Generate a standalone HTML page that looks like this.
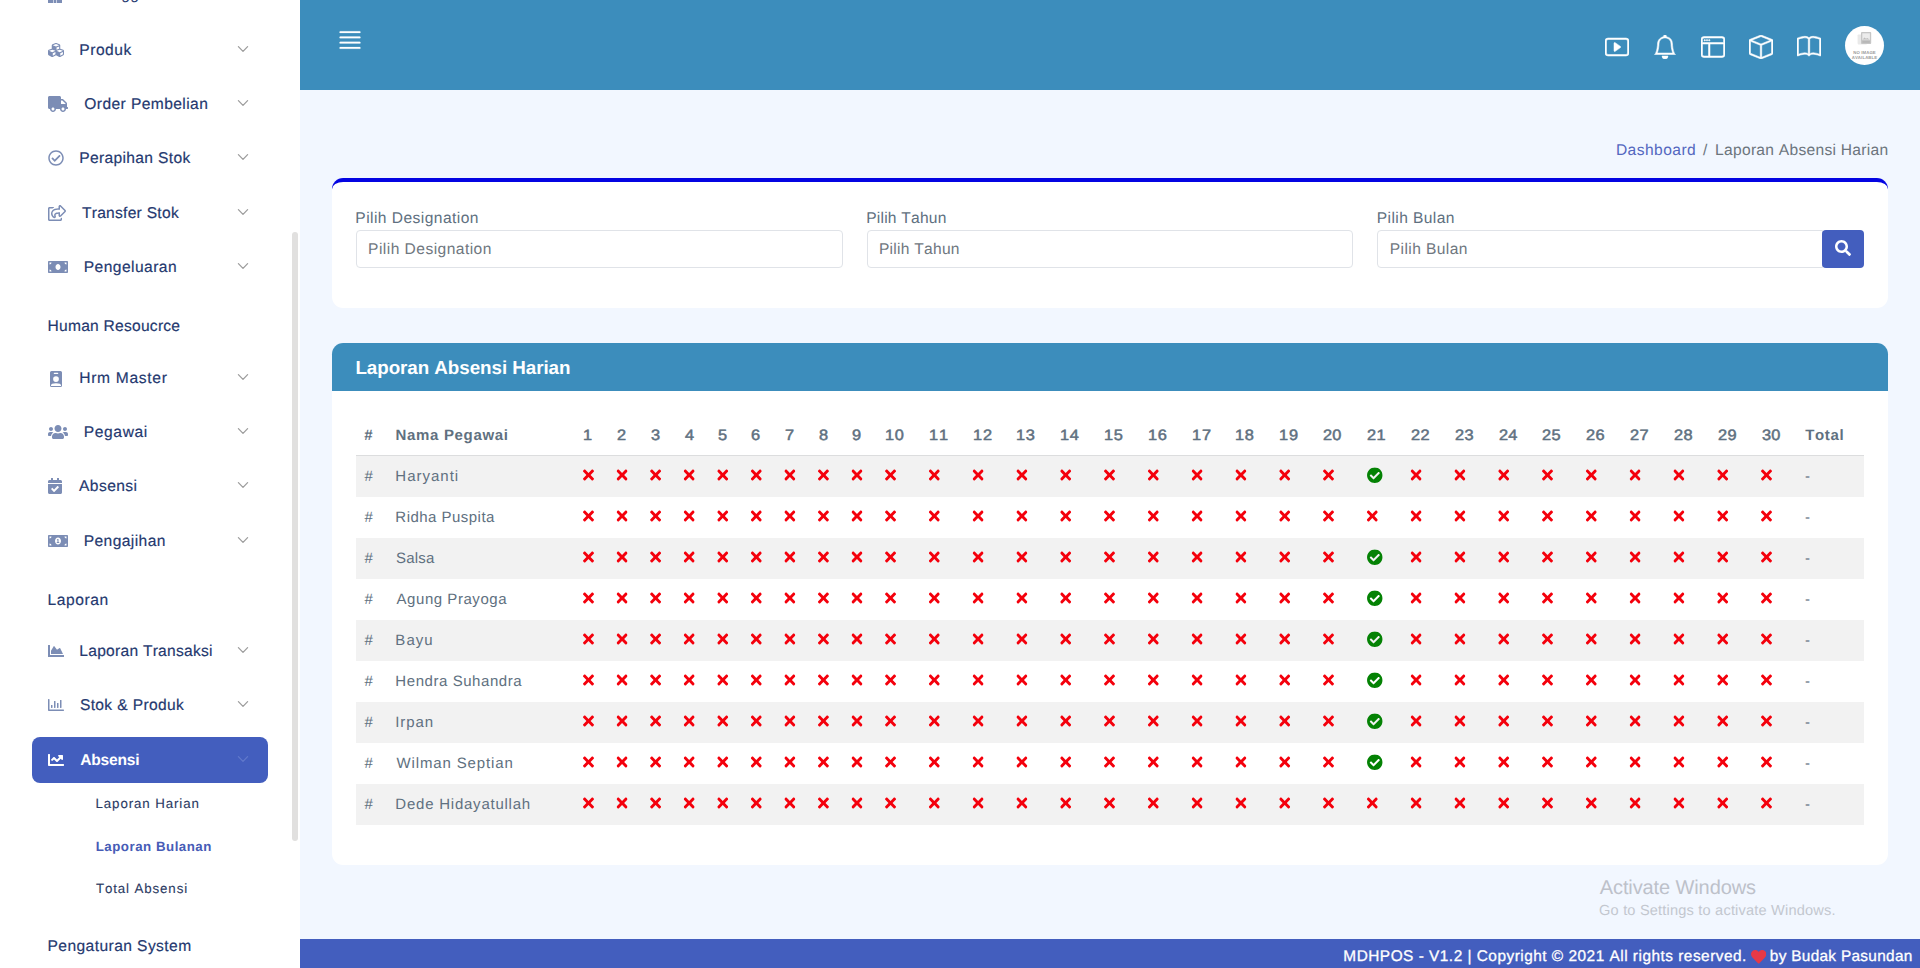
<!DOCTYPE html>
<html lang="en"><head><meta charset="utf-8"><title>Laporan Absensi Harian</title>
<style>
html,body{margin:0;padding:0}
body{width:1920px;height:968px;overflow:hidden;position:relative;background:#f2f7ff;font-family:"Liberation Sans",sans-serif;font-kerning:none;text-rendering:geometricPrecision}
.b{position:absolute;display:block}
.t{position:absolute;white-space:nowrap;line-height:20px;display:block}
</style></head><body>
<div class="b" style="left:0.00px;top:0.00px;width:300.00px;height:968.00px;background:#ffffff;"></div>
<div class="b" style="left:292.00px;top:232.00px;width:6.00px;height:609.00px;background:#e1e0df;border-radius:3px;"></div>
<div class="b" style="left:32.00px;top:737.00px;width:236.00px;height:46.00px;background:#435ebe;border-radius:8px;"></div>
<span class="t" style="left:79.32px;top:41.00px;font-size:15.60px;color:#25396f;letter-spacing:0.496px;-webkit-text-stroke:0.18px #25396f;">Produk</span>
<span class="t" style="left:84.26px;top:95.00px;font-size:15.60px;color:#25396f;letter-spacing:0.409px;-webkit-text-stroke:0.18px #25396f;">Order Pembelian</span>
<span class="t" style="left:79.32px;top:149.00px;font-size:15.60px;color:#25396f;letter-spacing:0.326px;-webkit-text-stroke:0.18px #25396f;">Perapihan Stok</span>
<span class="t" style="left:81.90px;top:204.00px;font-size:15.60px;color:#25396f;letter-spacing:0.266px;-webkit-text-stroke:0.18px #25396f;">Transfer Stok</span>
<span class="t" style="left:83.72px;top:258.00px;font-size:15.60px;color:#25396f;letter-spacing:0.442px;-webkit-text-stroke:0.18px #25396f;">Pengeluaran</span>
<span class="t" style="left:47.47px;top:317.00px;font-size:15.60px;color:#25396f;letter-spacing:0.245px;-webkit-text-stroke:0.18px #25396f;">Human Resoucrce</span>
<span class="t" style="left:79.32px;top:369.00px;font-size:15.60px;color:#25396f;letter-spacing:0.675px;-webkit-text-stroke:0.18px #25396f;">Hrm Master</span>
<span class="t" style="left:83.72px;top:423.00px;font-size:15.60px;color:#25396f;letter-spacing:0.623px;-webkit-text-stroke:0.18px #25396f;">Pegawai</span>
<span class="t" style="left:78.97px;top:477.00px;font-size:15.60px;color:#25396f;letter-spacing:0.430px;-webkit-text-stroke:0.18px #25396f;">Absensi</span>
<span class="t" style="left:83.72px;top:532.00px;font-size:15.60px;color:#25396f;letter-spacing:0.403px;-webkit-text-stroke:0.18px #25396f;">Pengajihan</span>
<span class="t" style="left:47.47px;top:591.00px;font-size:15.60px;color:#25396f;letter-spacing:0.590px;-webkit-text-stroke:0.18px #25396f;">Laporan</span>
<span class="t" style="left:79.32px;top:642.00px;font-size:15.60px;color:#25396f;letter-spacing:0.252px;-webkit-text-stroke:0.18px #25396f;">Laporan Transaksi</span>
<span class="t" style="left:79.89px;top:696.00px;font-size:15.60px;color:#25396f;letter-spacing:0.364px;-webkit-text-stroke:0.18px #25396f;">Stok &amp; Produk</span>
<span class="t" style="left:47.47px;top:937.00px;font-size:15.60px;color:#25396f;letter-spacing:0.422px;-webkit-text-stroke:0.18px #25396f;">Pengaturan System</span>
<span class="t" style="left:79.32px;top:-15.00px;font-size:15.60px;color:#25396f;letter-spacing:0.386px;">Pelanggan</span>
<span class="t" style="left:80.21px;top:751.00px;font-size:15.60px;color:#ffffff;letter-spacing:-0.216px;font-weight:700;">Absensi</span>
<span class="t" style="left:95.51px;top:794.00px;font-size:13.30px;color:#2b3a63;letter-spacing:0.905px;-webkit-text-stroke:0.12px #2b3a63;">Laporan Harian</span>
<span class="t" style="left:95.71px;top:837.00px;font-size:13.30px;color:#475cb6;letter-spacing:0.506px;font-weight:700;">Laporan Bulanan</span>
<span class="t" style="left:95.95px;top:879.00px;font-size:13.30px;color:#2b3a63;letter-spacing:0.885px;-webkit-text-stroke:0.12px #2b3a63;">Total Absensi</span>
<svg class="b" style="left:236.00px;top:44.00px;" width="14.00" height="10.00" viewBox="0 0 14 10"><polyline points="2.4,2.6 7,7.4 11.6,2.6" fill="none" stroke="#9c9c9c" stroke-width="1.25" stroke-linecap="round" stroke-linejoin="round"/></svg>
<svg class="b" style="left:236.00px;top:98.00px;" width="14.00" height="10.00" viewBox="0 0 14 10"><polyline points="2.4,2.6 7,7.4 11.6,2.6" fill="none" stroke="#9c9c9c" stroke-width="1.25" stroke-linecap="round" stroke-linejoin="round"/></svg>
<svg class="b" style="left:236.00px;top:152.00px;" width="14.00" height="10.00" viewBox="0 0 14 10"><polyline points="2.4,2.6 7,7.4 11.6,2.6" fill="none" stroke="#9c9c9c" stroke-width="1.25" stroke-linecap="round" stroke-linejoin="round"/></svg>
<svg class="b" style="left:236.00px;top:207.00px;" width="14.00" height="10.00" viewBox="0 0 14 10"><polyline points="2.4,2.6 7,7.4 11.6,2.6" fill="none" stroke="#9c9c9c" stroke-width="1.25" stroke-linecap="round" stroke-linejoin="round"/></svg>
<svg class="b" style="left:236.00px;top:261.00px;" width="14.00" height="10.00" viewBox="0 0 14 10"><polyline points="2.4,2.6 7,7.4 11.6,2.6" fill="none" stroke="#9c9c9c" stroke-width="1.25" stroke-linecap="round" stroke-linejoin="round"/></svg>
<svg class="b" style="left:236.00px;top:372.00px;" width="14.00" height="10.00" viewBox="0 0 14 10"><polyline points="2.4,2.6 7,7.4 11.6,2.6" fill="none" stroke="#9c9c9c" stroke-width="1.25" stroke-linecap="round" stroke-linejoin="round"/></svg>
<svg class="b" style="left:236.00px;top:426.00px;" width="14.00" height="10.00" viewBox="0 0 14 10"><polyline points="2.4,2.6 7,7.4 11.6,2.6" fill="none" stroke="#9c9c9c" stroke-width="1.25" stroke-linecap="round" stroke-linejoin="round"/></svg>
<svg class="b" style="left:236.00px;top:480.00px;" width="14.00" height="10.00" viewBox="0 0 14 10"><polyline points="2.4,2.6 7,7.4 11.6,2.6" fill="none" stroke="#9c9c9c" stroke-width="1.25" stroke-linecap="round" stroke-linejoin="round"/></svg>
<svg class="b" style="left:236.00px;top:535.00px;" width="14.00" height="10.00" viewBox="0 0 14 10"><polyline points="2.4,2.6 7,7.4 11.6,2.6" fill="none" stroke="#9c9c9c" stroke-width="1.25" stroke-linecap="round" stroke-linejoin="round"/></svg>
<svg class="b" style="left:236.00px;top:645.00px;" width="14.00" height="10.00" viewBox="0 0 14 10"><polyline points="2.4,2.6 7,7.4 11.6,2.6" fill="none" stroke="#9c9c9c" stroke-width="1.25" stroke-linecap="round" stroke-linejoin="round"/></svg>
<svg class="b" style="left:236.00px;top:699.00px;" width="14.00" height="10.00" viewBox="0 0 14 10"><polyline points="2.4,2.6 7,7.4 11.6,2.6" fill="none" stroke="#9c9c9c" stroke-width="1.25" stroke-linecap="round" stroke-linejoin="round"/></svg>
<svg class="b" style="left:236.00px;top:754.00px;" width="14.00" height="10.00" viewBox="0 0 14 10"><polyline points="2.4,2.6 7,7.4 11.6,2.6" fill="none" stroke="#6179cb" stroke-width="1.25" stroke-linecap="round" stroke-linejoin="round"/></svg>
<svg class="b" style="left:48.00px;top:42.30px;" width="16.00" height="16.00" viewBox="0 0 512 512"><path fill="#7c8db5" d="M488.6 250.2L392 214V105.5c0-15-9.300-28.400-23.400-33.700l-100-37.500c-8.100-3.100-17.100-3.100-25.300 0l-100 37.500c-14.100 5.300-23.400 18.700-23.400 33.700V214l-96.600 36.200C9.300 255.500 0 268.900 0 283.900V394c0 13.600 7.700 26.100 19.900 32.200l100 50c10.100 5.100 22.100 5.100 32.200 0l103.900-52 103.900 52c10.100 5.100 22.100 5.100 32.200 0l100-50c12.200-6.100 19.900-18.600 19.900-32.200V283.900c0-15-9.300-28.400-23.400-33.700zM358 214.800l-85 31.900v-68.200l85-37v73.300zM154 104.100l102-38.200 102 38.200v.600l-102 41.400-102-41.400v-.600zm84 291.100l-85 42.500v-79.100l85-38.800v75.400zm0-112l-102 41.400-102-41.400v-.600l102-38.200 102 38.200v.600zm240 112l-85 42.500v-79.100l85-38.800v75.400zm0-112l-102 41.400-102-41.400v-.600l102-38.200 102 38.200v.600z"/></svg>
<svg class="b" style="left:48.00px;top:96.00px;" width="20.00" height="16.00" viewBox="0 0 640 512"><path fill="#7c8db5" d="M624 352h-16V243.900c0-12.700-5.100-24.900-14.100-33.900L494 110.100c-9-9-21.200-14.100-33.900-14.100H416V48c0-26.500-21.500-48-48-48H48C21.500 0 0 21.500 0 48v320c0 26.500 21.500 48 48 48h16c0 53 43 96 96 96s96-43 96-96h128c0 53 43 96 96 96s96-43 96-96h48c8.800 0 16-7.200 16-16v-32c0-8.800-7.200-16-16-16zM160 464c-26.500 0-48-21.500-48-48s21.500-48 48-48 48 21.500 48 48-21.500 48-48 48zm320 0c-26.500 0-48-21.500-48-48s21.500-48 48-48 48 21.500 48 48-21.500 48-48 48zm80-208H416V144h44.100l99.900 99.900V256z"/></svg>
<svg class="b" style="left:48.00px;top:149.80px;" width="16.00" height="16.00" viewBox="0 0 512 512"><path fill="#7c8db5" d="M256 8C119.033 8 8 119.033 8 256s111.033 248 248 248 248-111.033 248-248S392.967 8 256 8zm0 48c110.532 0 200 89.451 200 200 0 110.532-89.451 200-200 200-110.532 0-200-89.451-200-200 0-110.532 89.451-200 200-200m140.204 130.267l-22.536-22.718c-4.667-4.705-12.265-4.736-16.970-.068L215.346 303.697l-59.792-60.277c-4.667-4.705-12.265-4.736-16.970-.069l-22.719 22.536c-4.705 4.667-4.736 12.265-.068 16.971l90.781 91.516c4.667 4.705 12.265 4.736 16.970.068l172.589-171.204c4.704-4.668 4.734-12.266.067-16.971z"/></svg>
<svg class="b" style="left:48.00px;top:204.80px;" width="18.00" height="16.00" viewBox="0 0 576 512"><path fill="#7c8db5" d="M561.938 158.060L417.940 14.092C387.926-15.922 336 5.097 336 48.032v57.198c-42.450 1.880-84.030 6.550-120.760 17.990-35.170 10.950-63.070 27.580-82.910 49.420C108.220 199.200 96 232.600 96 271.940c0 61.697 33.178 112.455 84.870 144.760 37.546 23.508 85.248-12.651 71.020-55.740-15.515-47.119-17.156-70.923 84.110-78.760V336c0 42.993 51.968 63.913 81.940 33.940l143.998-144c18.750-18.740 18.750-49.140 0-67.880zM384 336V232.160C255.309 234.082 166.492 255.350 206.310 376 176.790 357.550 144 324.080 144 271.940c0-109.334 129.140-118.947 240-119.850V48l144 144-144 144zm24.740 84.493a82.658 82.658 0 0 0 20.974-9.303c7.976-4.952 18.286.826 18.286 10.214V464c0 26.510-21.490 48-48 48H48c-26.510 0-48-21.490-48-48V112c0-26.510 21.490-48 48-48h132c6.627 0 12 5.373 12 12v4.486c0 4.917-2.987 9.369-7.569 11.152-13.702 5.331-26.396 11.537-38.050 18.585a12.138 12.138 0 0 1-6.280 1.777H54a6 6 0 0 0-6 6v340a6 6 0 0 0 6 6h340a6 6 0 0 0 6-6v-25.966c0-5.370 3.579-10.059 8.740-11.541z"/></svg>
<svg class="b" style="left:48.00px;top:259.00px;" width="20.00" height="16.00" viewBox="0 0 640 512"><path fill="#7c8db5" d="M608 64H32C14.330 64 0 78.330 0 96v320c0 17.670 14.330 32 32 32h576c17.670 0 32-14.330 32-32V96c0-17.670-14.330-32-32-32zM48 400v-64c35.350 0 64 28.650 64 64H48zm0-224v-64h64c0 35.350-28.650 64-64 64zm272 176c-44.190 0-80-42.990-80-96 0-53.020 35.820-96 80-96s80 42.980 80 96c0 53.030-35.830 96-80 96zm272 48h-64c0-35.350 28.650-64 64-64v64zm0-224c-35.350 0-64-28.650-64-64h64v64z"/></svg>
<svg class="b" style="left:50.00px;top:371.00px;" width="12.00" height="16.00" viewBox="0 0 384 512"><path fill="#7c8db5" fill-rule="evenodd" d="M48 0h288a48 48 0 0 1 48 48v416a48 48 0 0 1-48 48H48a48 48 0 0 1-48-48V48A48 48 0 0 1 48 0zM140 58h104a20 20 0 0 1 0 40H140a20 20 0 0 1 0-40zM192 164a92 92 0 1 0 0 184a92 92 0 1 0 0-184zM32 482v-24c0-42 50-64 160-64s160 22 160 64v24z"/></svg>
<svg class="b" style="left:48.00px;top:424.00px;" width="20.00" height="16.00" viewBox="0 0 640 512"><path fill="#7c8db5" d="M96 224c35.300 0 64-28.700 64-64s-28.700-64-64-64-64 28.700-64 64 28.700 64 64 64zm448 0c35.300 0 64-28.700 64-64s-28.700-64-64-64-64 28.700-64 64 28.700 64 64 64zm32 32h-64c-17.600 0-33.500 7.100-45.100 18.600 40.300 22.100 68.900 62 75.100 109.400h66c17.700 0 32-14.300 32-32v-32c0-35.300-28.700-64-64-64zm-256 0c61.900 0 112-50.100 112-112S381.900 32 320 32 208 82.100 208 144s50.100 112 112 112zm76.800 32h-8.300c-20.800 10-43.900 16-68.500 16s-47.600-6-68.500-16h-8.300C179.600 288 128 339.600 128 403.200V432c0 26.500 21.500 48 48 48h288c26.500 0 48-21.500 48-48v-28.800c0-63.600-51.600-115.200-115.200-115.200zm-223.700-13.400C161.500 263.100 145.600 256 128 256H64c-35.300 0-64 28.700-64 64v32c0 17.700 14.300 32 32 32h65.900c6.300-47.400 34.900-87.300 75.200-109.400z"/></svg>
<svg class="b" style="left:48.00px;top:478.00px;" width="14.00" height="16.00" viewBox="0 0 448 512"><path fill="#7c8db5" d="M436 160H12c-6.627 0-12-5.373-12-12v-36c0-26.510 21.490-48 48-48h48V12c0-6.627 5.373-12 12-12h40c6.627 0 12 5.373 12 12v52h128V12c0-6.627 5.373-12 12-12h40c6.627 0 12 5.373 12 12v52h48c26.510 0 48 21.490 48 48v36c0 6.627-5.373 12-12 12zM12 192h424c6.627 0 12 5.373 12 12v260c0 26.510-21.490 48-48 48H48c-26.510 0-48-21.490-48-48V204c0-6.627 5.373-12 12-12zm333.296 95.947l-28.169-28.398c-4.667-4.705-12.265-4.736-16.970-.068L194.120 364.665l-45.980-46.352c-4.667-4.705-12.266-4.736-16.971-.068l-28.397 28.170c-4.705 4.667-4.736 12.265-.068 16.970l82.601 83.269c4.667 4.705 12.265 4.736 16.970.068l142.953-141.805c4.705-4.667 4.736-12.265.068-16.970z"/></svg>
<svg class="b" style="left:48.00px;top:533.00px;" width="20.00" height="16.00" viewBox="0 0 640 512"><path fill="#7c8db5" d="M352 288h-16v-88c0-4.420-3.580-8-8-8h-13.580c-4.740 0-9.370 1.400-13.310 4.030l-15.330 10.220a7.994 7.994 0 0 0-2.220 11.090l8.880 13.310a7.994 7.994 0 0 0 11.090 2.220l.470-.310V288h-16c-4.420 0-8 3.580-8 8v16c0 4.420 3.580 8 8 8h64c4.420 0 8-3.580 8-8v-16c0-4.420-3.580-8-8-8zM608 64H32C14.330 64 0 78.330 0 96v320c0 17.670 14.330 32 32 32h576c17.670 0 32-14.330 32-32V96c0-17.670-14.330-32-32-32zM48 400v-64c35.350 0 64 28.650 64 64H48zm0-224v-64h64c0 35.350-28.650 64-64 64zm272 192c-53.020 0-96-50.150-96-112 0-61.860 42.980-112 96-112s96 50.140 96 112c0 61.870-43 112-96 112zm272 32h-64c0-35.350 28.650-64 64-64v64zm0-224c-35.350 0-64-28.650-64-64h64v64z"/></svg>
<svg class="b" style="left:48.00px;top:643.00px;" width="16.00" height="16.00" viewBox="0 0 512 512"><path fill="#7c8db5" d="M500 384c6.600 0 12 5.400 12 12v40c0 6.600-5.400 12-12 12H12c-6.600 0-12-5.400-12-12V76c0-6.600 5.400-12 12-12h40c6.600 0 12 5.400 12 12v308h436zM372.700 159.500L288 216l-85.300-113.700c-5.100-6.800-15.500-6.300-19.900 1L96 248v104h384l-89.900-187.800c-3.200-6.500-11.400-8.700-17.400-4.700z"/></svg>
<svg class="b" style="left:48.00px;top:697.00px;" width="16.00" height="16.00" viewBox="0 0 512 512"><path fill="#7c8db5" d="M396.800 352h22.400c6.400 0 12.800-6.400 12.800-12.800V108.800c0-6.400-6.400-12.800-12.800-12.800h-22.400c-6.400 0-12.800 6.400-12.800 12.800v230.400c0 6.400 6.400 12.800 12.800 12.800zm-192 0h22.400c6.400 0 12.800-6.400 12.800-12.800V140.800c0-6.400-6.400-12.800-12.800-12.800h-22.400c-6.400 0-12.800 6.400-12.800 12.800v198.400c0 6.400 6.400 12.800 12.800 12.800zm96 0h22.400c6.400 0 12.800-6.400 12.800-12.800V204.800c0-6.400-6.400-12.800-12.800-12.800h-22.400c-6.400 0-12.800 6.400-12.800 12.800v134.400c0 6.400 6.400 12.800 12.800 12.800zM496 400H48V80c0-8.840-7.160-16-16-16H16C7.160 64 0 71.160 0 80v336c0 17.670 14.330 32 32 32h464c8.840 0 16-7.160 16-16v-16c0-8.840-7.160-16-16-16zm-387.200-48h22.400c6.400 0 12.800-6.400 12.800-12.800v-70.400c0-6.400-6.400-12.800-12.800-12.800h-22.400c-6.400 0-12.800 6.400-12.800 12.800v70.400c0 6.400 6.400 12.800 12.800 12.800z"/></svg>
<svg class="b" style="left:48.00px;top:752.00px;" width="16.00" height="16.00" viewBox="0 0 512 512"><path fill="#ffffff" d="M496 384H64V80c0-8.840-7.160-16-16-16H16C7.160 64 0 71.160 0 80v336c0 17.670 14.330 32 32 32h464c8.840 0 16-7.160 16-16v-32c0-8.840-7.160-16-16-16zM464 96H345.940c-21.380 0-32.090 25.850-16.970 40.970l32.400 32.400L288 242.750l-73.370-73.370c-12.500-12.500-32.760-12.500-45.250 0l-68.690 68.690c-6.250 6.250-6.250 16.380 0 22.630l22.620 22.620c6.250 6.250 16.380 6.250 22.630 0L192 237.250l73.370 73.370c12.500 12.500 32.760 12.500 45.250 0l96-96 32.400 32.400c15.120 15.120 40.970 4.410 40.970-16.970V112c.010-8.840-7.150-16-15.990-16z"/></svg>
<div class="b" style="left:48.00px;top:-10.00px;width:14.00px;height:12.80px;background:#7c8db5;"></div>
<div class="b" style="left:53.40px;top:-10.00px;width:0.80px;height:12.80px;background:#c9d0e2;"></div>
<div class="b" style="left:56.30px;top:-10.00px;width:0.80px;height:12.80px;background:#c9d0e2;"></div>
<div class="b" style="left:300.00px;top:0.00px;width:1620.00px;height:90.00px;background:#3c8dbc;"></div>
<svg class="b" style="left:336.00px;top:26.00px;" width="28.00" height="28.00" viewBox="0 0 16 16"><g fill="#ffffff" stroke="#ffffff" stroke-width="0.12" stroke-linejoin="round"><path fill-rule="evenodd" d="M2 12.500a.5.5 0 0 1 .5-.5h11a.5.5 0 0 1 0 1h-11a.5.5 0 0 1-.5-.5zm0-3a.5.5 0 0 1 .5-.5h11a.5.5 0 0 1 0 1h-11a.5.5 0 0 1-.5-.5zm0-3a.5.5 0 0 1 .5-.5h11a.5.5 0 0 1 0 1h-11a.5.5 0 0 1-.5-.5zm0-3a.5.5 0 0 1 .5-.5h11a.5.5 0 0 1 0 1h-11a.5.5 0 0 1-.5-.5z"/></g></svg>
<svg class="b" style="left:1605.00px;top:35.00px;" width="24.00" height="24.00" viewBox="0 0 16 16"><g fill="#ffffff" stroke="#ffffff" stroke-width="0.35" stroke-linejoin="round"><path d="M6.790 5.093A.5.5 0 0 0 6 5.500v5a.5.5 0 0 0 .790.407l3.500-2.500a.5.5 0 0 0 0-.814l-3.500-2.500z"/><path d="M0 4a2 2 0 0 1 2-2h12a2 2 0 0 1 2 2v8a2 2 0 0 1-2 2H2a2 2 0 0 1-2-2V4zm15 0a1 1 0 0 0-1-1H2a1 1 0 0 0-1 1v8a1 1 0 0 0 1 1h12a1 1 0 0 0 1-1V4z"/></g></svg>
<svg class="b" style="left:1653.00px;top:35.00px;" width="24.00" height="24.00" viewBox="0 0 16 16"><g fill="#ffffff" stroke="#ffffff" stroke-width="0.35" stroke-linejoin="round"><path d="M8 16a2 2 0 0 0 2-2H6a2 2 0 0 0 2 2zM8 1.918l-.797.161A4.002 4.002 0 0 0 4 6c0 .628-.134 2.197-.459 3.742-.160.767-.376 1.566-.663 2.258h10.244c-.287-.692-.502-1.490-.663-2.258C12.134 8.197 12 6.628 12 6a4.002 4.002 0 0 0-3.203-3.920L8 1.917zM14.220 12c.223.447.481.801.780 1H1c.299-.199.557-.553.780-1C2.680 10.200 3 6.880 3 6c0-2.420 1.720-4.440 4.005-4.901a1 1 0 1 1 1.990 0A5.002 5.002 0 0 1 13 6c0 .880.320 4.200 1.220 6z"/></g></svg>
<svg class="b" style="left:1701.00px;top:35.00px;" width="24.00" height="24.00" viewBox="0 0 16 16"><g fill="#ffffff" stroke="#ffffff" stroke-width="0.35" stroke-linejoin="round"><path d="M2.500 4a.5.5 0 1 0 0-1 .5.5 0 0 0 0 1zm2-.5a.5.5 0 1 1-1 0 .5.5 0 0 1 1 0zm1 .5a.5.5 0 1 0 0-1 .5.5 0 0 0 0 1z"/><path d="M2 1a2 2 0 0 0-2 2v10a2 2 0 0 0 2 2h12a2 2 0 0 0 2-2V3a2 2 0 0 0-2-2H2zm12 1a1 1 0 0 1 1 1v2H1V3a1 1 0 0 1 1-1h12zM1 13V6h4v8H2a1 1 0 0 1-1-1zm5 1V6h9v7a1 1 0 0 1-1 1H6z"/></g></svg>
<svg class="b" style="left:1749.00px;top:35.00px;" width="24.00" height="24.00" viewBox="0 0 16 16"><g fill="#ffffff" stroke="#ffffff" stroke-width="0.35" stroke-linejoin="round"><path d="M8.186 1.113a.5.5 0 0 0-.372 0L1.846 3.500 8 5.961 14.154 3.500 8.186 1.113zM15 4.239l-6.500 2.600v7.922l6.500-2.600V4.240zM7.500 14.762V6.838L1 4.239v7.923l6.500 2.600zM7.443.184a1.500 1.500 0 0 1 1.114 0l7.129 2.852A.5.5 0 0 1 16 3.500v8.662a1 1 0 0 1-.629.928l-7.185 2.874a.5.5 0 0 1-.372 0L.630 13.090a1 1 0 0 1-.630-.928V3.500a.5.5 0 0 1 .314-.464L7.443.184z"/></g></svg>
<svg class="b" style="left:1797.00px;top:35.00px;" width="24.00" height="24.00" viewBox="0 0 16 16"><g fill="#ffffff" stroke="#ffffff" stroke-width="0.35" stroke-linejoin="round"><path d="M1 2.828c.885-.370 2.154-.769 3.388-.893 1.330-.134 2.458.063 3.112.752v9.746c-.935-.530-2.120-.603-3.213-.493-1.180.120-2.370.461-3.287.811V2.828zm7.500-.141c.654-.689 1.782-.886 3.112-.752 1.234.124 2.503.523 3.388.893v9.923c-.918-.350-2.107-.692-3.287-.810-1.094-.111-2.278-.039-3.213.492V2.687zM8 1.783C7.015.936 5.587.810 4.287.940c-1.514.153-3.042.672-3.994 1.105A.5.5 0 0 0 0 2.500v11a.5.5 0 0 0 .707.455c.882-.400 2.303-.881 3.680-1.020 1.409-.142 2.590.087 3.223.877a.5.5 0 0 0 .780 0c.633-.790 1.814-1.019 3.222-.877 1.378.139 2.800.620 3.681 1.020A.5.5 0 0 0 16 13.500v-11a.5.5 0 0 0-.293-.455c-.952-.433-2.480-.952-3.994-1.105C10.413.809 8.985.936 8 1.783z"/></g></svg>
<div class="b" style="left:1845.00px;top:26.00px;width:39.00px;height:39.00px;background:#ffffff;border-radius:50%;"></div>
<svg class="b" style="left:1856.00px;top:31.00px;" width="17.00" height="14.00" viewBox="0 0 17 14"><rect x="1.6" y="3.4" width="9.6" height="10" rx="0.8" fill="#e9e9e9"/><rect x="5" y="1" width="10.2" height="12" rx="0.9" fill="#c6c6c6"/><rect x="6.3" y="2.3" width="7.6" height="6.6" fill="#ececec"/><path d="M6.6 8.600l1.900-2.200 1.500 1.400 1.300-.900 2.300 1.700z" fill="#bdbdbd"/><rect x="6.3" y="10.2" width="7.6" height="1.500" fill="#b4b4b4"/></svg>
<span class="t" style="left:1847px;top:50.3px;width:35px;text-align:center;font-size:4.3px;line-height:5.1px;color:#9b9b9b;font-weight:700;letter-spacing:0.12px;white-space:normal">NO IMAGE AVAILABLE</span>
<span class="t" style="left:1615.92px;top:141.00px;font-size:15.60px;color:#5468c0;letter-spacing:0.446px;">Dashboard</span>
<span class="t" style="left:1703.00px;top:141.00px;font-size:15.60px;color:#6c757d;">/</span>
<span class="t" style="left:1715.12px;top:141.00px;font-size:15.60px;color:#6c757d;letter-spacing:0.272px;">Laporan Absensi Harian</span>
<div class="b" style="left:332.00px;top:178.00px;width:1556.00px;height:130.00px;background:#ffffff;border-radius:11.2px;border-top:4px solid #0404e2;box-sizing:border-box;"></div>
<span class="t" style="left:355.32px;top:209.00px;font-size:15.60px;color:#607080;letter-spacing:0.437px;">Pilih Designation</span>
<span class="t" style="left:866.22px;top:209.00px;font-size:15.60px;color:#607080;letter-spacing:0.215px;">Pilih Tahun</span>
<span class="t" style="left:1376.72px;top:209.00px;font-size:15.60px;color:#607080;letter-spacing:0.408px;">Pilih Bulan</span>
<div class="b" style="left:356.00px;top:230.00px;width:486.67px;height:38.00px;background:#ffffff;box-sizing:border-box;border:1px solid #e0e3e8;border-radius:4px;"></div>
<div class="b" style="left:866.67px;top:230.00px;width:486.67px;height:38.00px;background:#ffffff;box-sizing:border-box;border:1px solid #e0e3e8;border-radius:4px;"></div>
<div class="b" style="left:1377.33px;top:230.00px;width:445.50px;height:38.00px;background:#ffffff;box-sizing:border-box;border:1px solid #e0e3e8;border-radius:4px;border-top-right-radius:0;border-bottom-right-radius:0;"></div>
<span class="t" style="left:368.12px;top:240.00px;font-size:15.60px;color:#6f7780;letter-spacing:0.443px;">Pilih Designation</span>
<span class="t" style="left:878.97px;top:240.00px;font-size:15.60px;color:#6f7780;letter-spacing:0.250px;">Pilih Tahun</span>
<span class="t" style="left:1389.72px;top:240.00px;font-size:15.60px;color:#6f7780;letter-spacing:0.408px;">Pilih Bulan</span>
<div class="b" style="left:1822.00px;top:230.00px;width:42.00px;height:38.00px;background:#435ebe;border-radius:4px;"></div>
<svg class="b" style="left:1835.00px;top:240.00px;" width="16.00" height="16.00" viewBox="0 0 512 512"><path fill="#ffffff" d="M505 442.700L405.300 343c-4.500-4.500-10.600-7-17-7H372c27.600-35.300 44-79.700 44-128C416 93.100 322.900 0 208 0S0 93.100 0 208s93.100 208 208 208c48.300 0 92.700-16.400 128-44v16.300c0 6.400 2.500 12.500 7 17l99.700 99.700c9.400 9.400 24.600 9.400 33.900 0l28.300-28.300c9.400-9.400 9.400-24.600.100-34zM208 336c-70.700 0-128-57.200-128-128 0-70.700 57.200-128 128-128 70.700 0 128 57.200 128 128 0 70.700-57.200 128-128 128z"/></svg>
<div class="b" style="left:332.00px;top:343.00px;width:1556.00px;height:522.00px;background:#ffffff;border-radius:11.2px;"></div>
<div class="b" style="left:332.00px;top:343.00px;width:1556.00px;height:48.00px;background:#3c8dbc;border-radius:11.2px 11.2px 0 0;"></div>
<span class="t" style="left:355.44px;top:358.00px;font-size:18.80px;color:#ffffff;letter-spacing:-0.049px;font-weight:700;">Laporan Absensi Harian</span>
<div class="b" style="left:356.00px;top:455.50px;width:1508.00px;height:41.00px;background:#f2f2f2;"></div>
<div class="b" style="left:356.00px;top:537.50px;width:1508.00px;height:41.00px;background:#f2f2f2;"></div>
<div class="b" style="left:356.00px;top:619.50px;width:1508.00px;height:41.00px;background:#f2f2f2;"></div>
<div class="b" style="left:356.00px;top:701.50px;width:1508.00px;height:41.00px;background:#f2f2f2;"></div>
<div class="b" style="left:356.00px;top:783.50px;width:1508.00px;height:41.00px;background:#f2f2f2;"></div>
<div class="b" style="left:356.00px;top:455.00px;width:1508.00px;height:1.00px;background:#dcddde;"></div>
<span class="t" style="left:364.14px;top:426.00px;font-size:15.00px;color:#607080;font-weight:700;">#</span>
<span class="t" style="left:395.50px;top:426.00px;font-size:15.00px;color:#607080;letter-spacing:0.674px;font-weight:700;">Nama Pegawai</span>
<span class="t" style="left:583.05px;top:426.00px;font-size:15.00px;color:#607080;transform:scaleX(1.090);transform-origin:0 0;-webkit-text-stroke:0.5px #607080;">1</span>
<span class="t" style="left:617.04px;top:426.00px;font-size:15.00px;color:#607080;transform:scaleX(1.090);transform-origin:0 0;-webkit-text-stroke:0.5px #607080;">2</span>
<span class="t" style="left:650.80px;top:426.00px;font-size:15.00px;color:#607080;transform:scaleX(1.090);transform-origin:0 0;-webkit-text-stroke:0.5px #607080;">3</span>
<span class="t" style="left:684.60px;top:426.00px;font-size:15.00px;color:#607080;transform:scaleX(1.090);transform-origin:0 0;-webkit-text-stroke:0.5px #607080;">4</span>
<span class="t" style="left:717.89px;top:426.00px;font-size:15.00px;color:#607080;transform:scaleX(1.090);transform-origin:0 0;-webkit-text-stroke:0.5px #607080;">5</span>
<span class="t" style="left:751.27px;top:426.00px;font-size:15.00px;color:#607080;transform:scaleX(1.090);transform-origin:0 0;-webkit-text-stroke:0.5px #607080;">6</span>
<span class="t" style="left:784.82px;top:426.00px;font-size:15.00px;color:#607080;transform:scaleX(1.090);transform-origin:0 0;-webkit-text-stroke:0.5px #607080;">7</span>
<span class="t" style="left:818.51px;top:426.00px;font-size:15.00px;color:#607080;transform:scaleX(1.090);transform-origin:0 0;-webkit-text-stroke:0.5px #607080;">8</span>
<span class="t" style="left:852.01px;top:426.00px;font-size:15.00px;color:#607080;transform:scaleX(1.090);transform-origin:0 0;-webkit-text-stroke:0.5px #607080;">9</span>
<span class="t" style="left:885.09px;top:426.00px;font-size:15.00px;color:#607080;letter-spacing:0.640px;transform:scaleX(1.090);transform-origin:0 0;-webkit-text-stroke:0.5px #607080;">10</span>
<span class="t" style="left:928.85px;top:426.00px;font-size:15.00px;color:#607080;letter-spacing:0.787px;transform:scaleX(1.090);transform-origin:0 0;-webkit-text-stroke:0.5px #607080;">11</span>
<span class="t" style="left:972.65px;top:426.00px;font-size:15.00px;color:#607080;letter-spacing:0.809px;transform:scaleX(1.090);transform-origin:0 0;-webkit-text-stroke:0.5px #607080;">12</span>
<span class="t" style="left:1016.45px;top:426.00px;font-size:15.00px;color:#607080;letter-spacing:0.714px;transform:scaleX(1.090);transform-origin:0 0;-webkit-text-stroke:0.5px #607080;">13</span>
<span class="t" style="left:1060.25px;top:426.00px;font-size:15.00px;color:#607080;letter-spacing:0.494px;transform:scaleX(1.090);transform-origin:0 0;-webkit-text-stroke:0.5px #607080;">14</span>
<span class="t" style="left:1104.05px;top:426.00px;font-size:15.00px;color:#607080;letter-spacing:0.684px;transform:scaleX(1.090);transform-origin:0 0;-webkit-text-stroke:0.5px #607080;">15</span>
<span class="t" style="left:1147.85px;top:426.00px;font-size:15.00px;color:#607080;letter-spacing:0.714px;transform:scaleX(1.090);transform-origin:0 0;-webkit-text-stroke:0.5px #607080;">16</span>
<span class="t" style="left:1191.65px;top:426.00px;font-size:15.00px;color:#607080;letter-spacing:0.809px;transform:scaleX(1.090);transform-origin:0 0;-webkit-text-stroke:0.5px #607080;">17</span>
<span class="t" style="left:1235.45px;top:426.00px;font-size:15.00px;color:#607080;letter-spacing:0.706px;transform:scaleX(1.090);transform-origin:0 0;-webkit-text-stroke:0.5px #607080;">18</span>
<span class="t" style="left:1279.25px;top:426.00px;font-size:15.00px;color:#607080;letter-spacing:0.765px;transform:scaleX(1.090);transform-origin:0 0;-webkit-text-stroke:0.5px #607080;">19</span>
<span class="t" style="left:1323.48px;top:426.00px;font-size:15.00px;color:#607080;letter-spacing:0.252px;transform:scaleX(1.090);transform-origin:0 0;-webkit-text-stroke:0.5px #607080;">20</span>
<span class="t" style="left:1367.28px;top:426.00px;font-size:15.00px;color:#607080;letter-spacing:0.399px;transform:scaleX(1.090);transform-origin:0 0;-webkit-text-stroke:0.5px #607080;">21</span>
<span class="t" style="left:1411.08px;top:426.00px;font-size:15.00px;color:#607080;letter-spacing:0.421px;transform:scaleX(1.090);transform-origin:0 0;-webkit-text-stroke:0.5px #607080;">22</span>
<span class="t" style="left:1454.88px;top:426.00px;font-size:15.00px;color:#607080;letter-spacing:0.325px;transform:scaleX(1.090);transform-origin:0 0;-webkit-text-stroke:0.5px #607080;">23</span>
<span class="t" style="left:1498.68px;top:426.00px;font-size:15.00px;color:#607080;letter-spacing:0.106px;transform:scaleX(1.090);transform-origin:0 0;-webkit-text-stroke:0.5px #607080;">24</span>
<span class="t" style="left:1542.48px;top:426.00px;font-size:15.00px;color:#607080;letter-spacing:0.296px;transform:scaleX(1.090);transform-origin:0 0;-webkit-text-stroke:0.5px #607080;">25</span>
<span class="t" style="left:1586.28px;top:426.00px;font-size:15.00px;color:#607080;letter-spacing:0.325px;transform:scaleX(1.090);transform-origin:0 0;-webkit-text-stroke:0.5px #607080;">26</span>
<span class="t" style="left:1630.08px;top:426.00px;font-size:15.00px;color:#607080;letter-spacing:0.421px;transform:scaleX(1.090);transform-origin:0 0;-webkit-text-stroke:0.5px #607080;">27</span>
<span class="t" style="left:1673.88px;top:426.00px;font-size:15.00px;color:#607080;letter-spacing:0.318px;transform:scaleX(1.090);transform-origin:0 0;-webkit-text-stroke:0.5px #607080;">28</span>
<span class="t" style="left:1717.68px;top:426.00px;font-size:15.00px;color:#607080;letter-spacing:0.377px;transform:scaleX(1.090);transform-origin:0 0;-webkit-text-stroke:0.5px #607080;">29</span>
<span class="t" style="left:1761.68px;top:426.00px;font-size:15.00px;color:#607080;letter-spacing:0.069px;transform:scaleX(1.090);transform-origin:0 0;-webkit-text-stroke:0.5px #607080;">30</span>
<span class="t" style="left:1805.13px;top:426.00px;font-size:15.00px;color:#607080;letter-spacing:0.650px;font-weight:700;">Total</span>
<span class="t" style="left:364.53px;top:467.00px;font-size:15.00px;color:#607080;">#</span>
<span class="t" style="left:395.37px;top:467.00px;font-size:15.00px;color:#607080;letter-spacing:0.998px;">Haryanti</span>
<span class="t" style="left:1804.93px;top:467.00px;font-size:15.00px;color:#607080;">-</span>
<svg class="b" style="left:356.00px;top:466.90px;" width="1508.00" height="17.00" viewBox="0 0 1508 17"><defs><symbol id="xx" viewBox="0 0 352 512" width="11" height="16"><path fill="#f4000c" d="M242.720 256l100.070-100.070c12.280-12.280 12.280-32.190 0-44.480l-22.240-22.240c-12.280-12.280-32.190-12.280-44.480 0L176 189.280 75.930 89.210c-12.280-12.280-32.190-12.280-44.480 0L9.210 111.450c-12.280 12.280-12.280 32.190 0 44.480L109.280 256 9.210 356.070c-12.280 12.280-12.280 32.190 0 44.480l22.240 22.240c12.280 12.280 32.200 12.280 44.480 0L176 322.720l100.070 100.070c12.280 12.280 32.200 12.280 44.480 0l22.240-22.240c12.280-12.280 12.280-32.190 0-44.480L242.720 256z"/></symbol></defs><use href="#xx" x="227.00" y="0" width="11" height="16"/><use href="#xx" x="260.56" y="0" width="11" height="16"/><use href="#xx" x="294.12" y="0" width="11" height="16"/><use href="#xx" x="327.68" y="0" width="11" height="16"/><use href="#xx" x="361.24" y="0" width="11" height="16"/><use href="#xx" x="394.80" y="0" width="11" height="16"/><use href="#xx" x="428.36" y="0" width="11" height="16"/><use href="#xx" x="461.92" y="0" width="11" height="16"/><use href="#xx" x="495.48" y="0" width="11" height="16"/><use href="#xx" x="529.04" y="0" width="11" height="16"/><use href="#xx" x="572.80" y="0" width="11" height="16"/><use href="#xx" x="616.60" y="0" width="11" height="16"/><use href="#xx" x="660.40" y="0" width="11" height="16"/><use href="#xx" x="704.20" y="0" width="11" height="16"/><use href="#xx" x="748.00" y="0" width="11" height="16"/><use href="#xx" x="791.80" y="0" width="11" height="16"/><use href="#xx" x="835.60" y="0" width="11" height="16"/><use href="#xx" x="879.40" y="0" width="11" height="16"/><use href="#xx" x="923.20" y="0" width="11" height="16"/><use href="#xx" x="967.00" y="0" width="11" height="16"/><svg x="1010.80" y="0.15" width="16" height="16" viewBox="0 0 512 512"><path fill="#048204" d="M504 256c0 136.967-111.033 248-248 248S8 392.967 8 256 119.033 8 256 8s248 111.033 248 248zM227.314 387.314l184-184c6.248-6.248 6.248-16.379 0-22.627l-22.627-22.627c-6.248-6.249-16.379-6.249-22.628 0L216 308.118l-70.059-70.059c-6.248-6.248-16.379-6.248-22.628 0l-22.627 22.627c-6.248 6.248-6.248 16.379 0 22.627l104 104c6.249 6.249 16.379 6.249 22.628.001z"/></svg><use href="#xx" x="1054.60" y="0" width="11" height="16"/><use href="#xx" x="1098.40" y="0" width="11" height="16"/><use href="#xx" x="1142.20" y="0" width="11" height="16"/><use href="#xx" x="1186.00" y="0" width="11" height="16"/><use href="#xx" x="1229.80" y="0" width="11" height="16"/><use href="#xx" x="1273.60" y="0" width="11" height="16"/><use href="#xx" x="1317.40" y="0" width="11" height="16"/><use href="#xx" x="1361.20" y="0" width="11" height="16"/><use href="#xx" x="1405.00" y="0" width="11" height="16"/></svg>
<span class="t" style="left:364.53px;top:508.00px;font-size:15.00px;color:#607080;">#</span>
<span class="t" style="left:395.37px;top:508.00px;font-size:15.00px;color:#607080;letter-spacing:0.470px;">Ridha Puspita</span>
<span class="t" style="left:1804.93px;top:508.00px;font-size:15.00px;color:#607080;">-</span>
<svg class="b" style="left:356.00px;top:507.90px;" width="1508.00" height="17.00" viewBox="0 0 1508 17"><use href="#xx" x="227.00" y="0" width="11" height="16"/><use href="#xx" x="260.56" y="0" width="11" height="16"/><use href="#xx" x="294.12" y="0" width="11" height="16"/><use href="#xx" x="327.68" y="0" width="11" height="16"/><use href="#xx" x="361.24" y="0" width="11" height="16"/><use href="#xx" x="394.80" y="0" width="11" height="16"/><use href="#xx" x="428.36" y="0" width="11" height="16"/><use href="#xx" x="461.92" y="0" width="11" height="16"/><use href="#xx" x="495.48" y="0" width="11" height="16"/><use href="#xx" x="529.04" y="0" width="11" height="16"/><use href="#xx" x="572.80" y="0" width="11" height="16"/><use href="#xx" x="616.60" y="0" width="11" height="16"/><use href="#xx" x="660.40" y="0" width="11" height="16"/><use href="#xx" x="704.20" y="0" width="11" height="16"/><use href="#xx" x="748.00" y="0" width="11" height="16"/><use href="#xx" x="791.80" y="0" width="11" height="16"/><use href="#xx" x="835.60" y="0" width="11" height="16"/><use href="#xx" x="879.40" y="0" width="11" height="16"/><use href="#xx" x="923.20" y="0" width="11" height="16"/><use href="#xx" x="967.00" y="0" width="11" height="16"/><use href="#xx" x="1010.80" y="0" width="11" height="16"/><use href="#xx" x="1054.60" y="0" width="11" height="16"/><use href="#xx" x="1098.40" y="0" width="11" height="16"/><use href="#xx" x="1142.20" y="0" width="11" height="16"/><use href="#xx" x="1186.00" y="0" width="11" height="16"/><use href="#xx" x="1229.80" y="0" width="11" height="16"/><use href="#xx" x="1273.60" y="0" width="11" height="16"/><use href="#xx" x="1317.40" y="0" width="11" height="16"/><use href="#xx" x="1361.20" y="0" width="11" height="16"/><use href="#xx" x="1405.00" y="0" width="11" height="16"/></svg>
<span class="t" style="left:364.53px;top:549.00px;font-size:15.00px;color:#607080;">#</span>
<span class="t" style="left:395.92px;top:549.00px;font-size:15.00px;color:#607080;letter-spacing:0.215px;">Salsa</span>
<span class="t" style="left:1804.93px;top:549.00px;font-size:15.00px;color:#607080;">-</span>
<svg class="b" style="left:356.00px;top:548.90px;" width="1508.00" height="17.00" viewBox="0 0 1508 17"><use href="#xx" x="227.00" y="0" width="11" height="16"/><use href="#xx" x="260.56" y="0" width="11" height="16"/><use href="#xx" x="294.12" y="0" width="11" height="16"/><use href="#xx" x="327.68" y="0" width="11" height="16"/><use href="#xx" x="361.24" y="0" width="11" height="16"/><use href="#xx" x="394.80" y="0" width="11" height="16"/><use href="#xx" x="428.36" y="0" width="11" height="16"/><use href="#xx" x="461.92" y="0" width="11" height="16"/><use href="#xx" x="495.48" y="0" width="11" height="16"/><use href="#xx" x="529.04" y="0" width="11" height="16"/><use href="#xx" x="572.80" y="0" width="11" height="16"/><use href="#xx" x="616.60" y="0" width="11" height="16"/><use href="#xx" x="660.40" y="0" width="11" height="16"/><use href="#xx" x="704.20" y="0" width="11" height="16"/><use href="#xx" x="748.00" y="0" width="11" height="16"/><use href="#xx" x="791.80" y="0" width="11" height="16"/><use href="#xx" x="835.60" y="0" width="11" height="16"/><use href="#xx" x="879.40" y="0" width="11" height="16"/><use href="#xx" x="923.20" y="0" width="11" height="16"/><use href="#xx" x="967.00" y="0" width="11" height="16"/><svg x="1010.80" y="0.15" width="16" height="16" viewBox="0 0 512 512"><path fill="#048204" d="M504 256c0 136.967-111.033 248-248 248S8 392.967 8 256 119.033 8 256 8s248 111.033 248 248zM227.314 387.314l184-184c6.248-6.248 6.248-16.379 0-22.627l-22.627-22.627c-6.248-6.249-16.379-6.249-22.628 0L216 308.118l-70.059-70.059c-6.248-6.248-16.379-6.248-22.628 0l-22.627 22.627c-6.248 6.248-6.248 16.379 0 22.627l104 104c6.249 6.249 16.379 6.249 22.628.001z"/></svg><use href="#xx" x="1054.60" y="0" width="11" height="16"/><use href="#xx" x="1098.40" y="0" width="11" height="16"/><use href="#xx" x="1142.20" y="0" width="11" height="16"/><use href="#xx" x="1186.00" y="0" width="11" height="16"/><use href="#xx" x="1229.80" y="0" width="11" height="16"/><use href="#xx" x="1273.60" y="0" width="11" height="16"/><use href="#xx" x="1317.40" y="0" width="11" height="16"/><use href="#xx" x="1361.20" y="0" width="11" height="16"/><use href="#xx" x="1405.00" y="0" width="11" height="16"/></svg>
<span class="t" style="left:364.53px;top:590.00px;font-size:15.00px;color:#607080;">#</span>
<span class="t" style="left:396.57px;top:590.00px;font-size:15.00px;color:#607080;letter-spacing:0.543px;">Agung Prayoga</span>
<span class="t" style="left:1804.93px;top:590.00px;font-size:15.00px;color:#607080;">-</span>
<svg class="b" style="left:356.00px;top:589.90px;" width="1508.00" height="17.00" viewBox="0 0 1508 17"><use href="#xx" x="227.00" y="0" width="11" height="16"/><use href="#xx" x="260.56" y="0" width="11" height="16"/><use href="#xx" x="294.12" y="0" width="11" height="16"/><use href="#xx" x="327.68" y="0" width="11" height="16"/><use href="#xx" x="361.24" y="0" width="11" height="16"/><use href="#xx" x="394.80" y="0" width="11" height="16"/><use href="#xx" x="428.36" y="0" width="11" height="16"/><use href="#xx" x="461.92" y="0" width="11" height="16"/><use href="#xx" x="495.48" y="0" width="11" height="16"/><use href="#xx" x="529.04" y="0" width="11" height="16"/><use href="#xx" x="572.80" y="0" width="11" height="16"/><use href="#xx" x="616.60" y="0" width="11" height="16"/><use href="#xx" x="660.40" y="0" width="11" height="16"/><use href="#xx" x="704.20" y="0" width="11" height="16"/><use href="#xx" x="748.00" y="0" width="11" height="16"/><use href="#xx" x="791.80" y="0" width="11" height="16"/><use href="#xx" x="835.60" y="0" width="11" height="16"/><use href="#xx" x="879.40" y="0" width="11" height="16"/><use href="#xx" x="923.20" y="0" width="11" height="16"/><use href="#xx" x="967.00" y="0" width="11" height="16"/><svg x="1010.80" y="0.15" width="16" height="16" viewBox="0 0 512 512"><path fill="#048204" d="M504 256c0 136.967-111.033 248-248 248S8 392.967 8 256 119.033 8 256 8s248 111.033 248 248zM227.314 387.314l184-184c6.248-6.248 6.248-16.379 0-22.627l-22.627-22.627c-6.248-6.249-16.379-6.249-22.628 0L216 308.118l-70.059-70.059c-6.248-6.248-16.379-6.248-22.628 0l-22.627 22.627c-6.248 6.248-6.248 16.379 0 22.627l104 104c6.249 6.249 16.379 6.249 22.628.001z"/></svg><use href="#xx" x="1054.60" y="0" width="11" height="16"/><use href="#xx" x="1098.40" y="0" width="11" height="16"/><use href="#xx" x="1142.20" y="0" width="11" height="16"/><use href="#xx" x="1186.00" y="0" width="11" height="16"/><use href="#xx" x="1229.80" y="0" width="11" height="16"/><use href="#xx" x="1273.60" y="0" width="11" height="16"/><use href="#xx" x="1317.40" y="0" width="11" height="16"/><use href="#xx" x="1361.20" y="0" width="11" height="16"/><use href="#xx" x="1405.00" y="0" width="11" height="16"/></svg>
<span class="t" style="left:364.53px;top:631.00px;font-size:15.00px;color:#607080;">#</span>
<span class="t" style="left:395.37px;top:631.00px;font-size:15.00px;color:#607080;letter-spacing:1.012px;">Bayu</span>
<span class="t" style="left:1804.93px;top:631.00px;font-size:15.00px;color:#607080;">-</span>
<svg class="b" style="left:356.00px;top:630.90px;" width="1508.00" height="17.00" viewBox="0 0 1508 17"><use href="#xx" x="227.00" y="0" width="11" height="16"/><use href="#xx" x="260.56" y="0" width="11" height="16"/><use href="#xx" x="294.12" y="0" width="11" height="16"/><use href="#xx" x="327.68" y="0" width="11" height="16"/><use href="#xx" x="361.24" y="0" width="11" height="16"/><use href="#xx" x="394.80" y="0" width="11" height="16"/><use href="#xx" x="428.36" y="0" width="11" height="16"/><use href="#xx" x="461.92" y="0" width="11" height="16"/><use href="#xx" x="495.48" y="0" width="11" height="16"/><use href="#xx" x="529.04" y="0" width="11" height="16"/><use href="#xx" x="572.80" y="0" width="11" height="16"/><use href="#xx" x="616.60" y="0" width="11" height="16"/><use href="#xx" x="660.40" y="0" width="11" height="16"/><use href="#xx" x="704.20" y="0" width="11" height="16"/><use href="#xx" x="748.00" y="0" width="11" height="16"/><use href="#xx" x="791.80" y="0" width="11" height="16"/><use href="#xx" x="835.60" y="0" width="11" height="16"/><use href="#xx" x="879.40" y="0" width="11" height="16"/><use href="#xx" x="923.20" y="0" width="11" height="16"/><use href="#xx" x="967.00" y="0" width="11" height="16"/><svg x="1010.80" y="0.15" width="16" height="16" viewBox="0 0 512 512"><path fill="#048204" d="M504 256c0 136.967-111.033 248-248 248S8 392.967 8 256 119.033 8 256 8s248 111.033 248 248zM227.314 387.314l184-184c6.248-6.248 6.248-16.379 0-22.627l-22.627-22.627c-6.248-6.249-16.379-6.249-22.628 0L216 308.118l-70.059-70.059c-6.248-6.248-16.379-6.248-22.628 0l-22.627 22.627c-6.248 6.248-6.248 16.379 0 22.627l104 104c6.249 6.249 16.379 6.249 22.628.001z"/></svg><use href="#xx" x="1054.60" y="0" width="11" height="16"/><use href="#xx" x="1098.40" y="0" width="11" height="16"/><use href="#xx" x="1142.20" y="0" width="11" height="16"/><use href="#xx" x="1186.00" y="0" width="11" height="16"/><use href="#xx" x="1229.80" y="0" width="11" height="16"/><use href="#xx" x="1273.60" y="0" width="11" height="16"/><use href="#xx" x="1317.40" y="0" width="11" height="16"/><use href="#xx" x="1361.20" y="0" width="11" height="16"/><use href="#xx" x="1405.00" y="0" width="11" height="16"/></svg>
<span class="t" style="left:364.53px;top:672.00px;font-size:15.00px;color:#607080;">#</span>
<span class="t" style="left:395.37px;top:672.00px;font-size:15.00px;color:#607080;letter-spacing:0.558px;">Hendra Suhandra</span>
<span class="t" style="left:1804.93px;top:672.00px;font-size:15.00px;color:#607080;">-</span>
<svg class="b" style="left:356.00px;top:671.90px;" width="1508.00" height="17.00" viewBox="0 0 1508 17"><use href="#xx" x="227.00" y="0" width="11" height="16"/><use href="#xx" x="260.56" y="0" width="11" height="16"/><use href="#xx" x="294.12" y="0" width="11" height="16"/><use href="#xx" x="327.68" y="0" width="11" height="16"/><use href="#xx" x="361.24" y="0" width="11" height="16"/><use href="#xx" x="394.80" y="0" width="11" height="16"/><use href="#xx" x="428.36" y="0" width="11" height="16"/><use href="#xx" x="461.92" y="0" width="11" height="16"/><use href="#xx" x="495.48" y="0" width="11" height="16"/><use href="#xx" x="529.04" y="0" width="11" height="16"/><use href="#xx" x="572.80" y="0" width="11" height="16"/><use href="#xx" x="616.60" y="0" width="11" height="16"/><use href="#xx" x="660.40" y="0" width="11" height="16"/><use href="#xx" x="704.20" y="0" width="11" height="16"/><use href="#xx" x="748.00" y="0" width="11" height="16"/><use href="#xx" x="791.80" y="0" width="11" height="16"/><use href="#xx" x="835.60" y="0" width="11" height="16"/><use href="#xx" x="879.40" y="0" width="11" height="16"/><use href="#xx" x="923.20" y="0" width="11" height="16"/><use href="#xx" x="967.00" y="0" width="11" height="16"/><svg x="1010.80" y="0.15" width="16" height="16" viewBox="0 0 512 512"><path fill="#048204" d="M504 256c0 136.967-111.033 248-248 248S8 392.967 8 256 119.033 8 256 8s248 111.033 248 248zM227.314 387.314l184-184c6.248-6.248 6.248-16.379 0-22.627l-22.627-22.627c-6.248-6.249-16.379-6.249-22.628 0L216 308.118l-70.059-70.059c-6.248-6.248-16.379-6.248-22.628 0l-22.627 22.627c-6.248 6.248-6.248 16.379 0 22.627l104 104c6.249 6.249 16.379 6.249 22.628.001z"/></svg><use href="#xx" x="1054.60" y="0" width="11" height="16"/><use href="#xx" x="1098.40" y="0" width="11" height="16"/><use href="#xx" x="1142.20" y="0" width="11" height="16"/><use href="#xx" x="1186.00" y="0" width="11" height="16"/><use href="#xx" x="1229.80" y="0" width="11" height="16"/><use href="#xx" x="1273.60" y="0" width="11" height="16"/><use href="#xx" x="1317.40" y="0" width="11" height="16"/><use href="#xx" x="1361.20" y="0" width="11" height="16"/><use href="#xx" x="1405.00" y="0" width="11" height="16"/></svg>
<span class="t" style="left:364.53px;top:713.00px;font-size:15.00px;color:#607080;">#</span>
<span class="t" style="left:395.22px;top:713.00px;font-size:15.00px;color:#607080;letter-spacing:0.892px;">Irpan</span>
<span class="t" style="left:1804.93px;top:713.00px;font-size:15.00px;color:#607080;">-</span>
<svg class="b" style="left:356.00px;top:712.90px;" width="1508.00" height="17.00" viewBox="0 0 1508 17"><use href="#xx" x="227.00" y="0" width="11" height="16"/><use href="#xx" x="260.56" y="0" width="11" height="16"/><use href="#xx" x="294.12" y="0" width="11" height="16"/><use href="#xx" x="327.68" y="0" width="11" height="16"/><use href="#xx" x="361.24" y="0" width="11" height="16"/><use href="#xx" x="394.80" y="0" width="11" height="16"/><use href="#xx" x="428.36" y="0" width="11" height="16"/><use href="#xx" x="461.92" y="0" width="11" height="16"/><use href="#xx" x="495.48" y="0" width="11" height="16"/><use href="#xx" x="529.04" y="0" width="11" height="16"/><use href="#xx" x="572.80" y="0" width="11" height="16"/><use href="#xx" x="616.60" y="0" width="11" height="16"/><use href="#xx" x="660.40" y="0" width="11" height="16"/><use href="#xx" x="704.20" y="0" width="11" height="16"/><use href="#xx" x="748.00" y="0" width="11" height="16"/><use href="#xx" x="791.80" y="0" width="11" height="16"/><use href="#xx" x="835.60" y="0" width="11" height="16"/><use href="#xx" x="879.40" y="0" width="11" height="16"/><use href="#xx" x="923.20" y="0" width="11" height="16"/><use href="#xx" x="967.00" y="0" width="11" height="16"/><svg x="1010.80" y="0.15" width="16" height="16" viewBox="0 0 512 512"><path fill="#048204" d="M504 256c0 136.967-111.033 248-248 248S8 392.967 8 256 119.033 8 256 8s248 111.033 248 248zM227.314 387.314l184-184c6.248-6.248 6.248-16.379 0-22.627l-22.627-22.627c-6.248-6.249-16.379-6.249-22.628 0L216 308.118l-70.059-70.059c-6.248-6.248-16.379-6.248-22.628 0l-22.627 22.627c-6.248 6.248-6.248 16.379 0 22.627l104 104c6.249 6.249 16.379 6.249 22.628.001z"/></svg><use href="#xx" x="1054.60" y="0" width="11" height="16"/><use href="#xx" x="1098.40" y="0" width="11" height="16"/><use href="#xx" x="1142.20" y="0" width="11" height="16"/><use href="#xx" x="1186.00" y="0" width="11" height="16"/><use href="#xx" x="1229.80" y="0" width="11" height="16"/><use href="#xx" x="1273.60" y="0" width="11" height="16"/><use href="#xx" x="1317.40" y="0" width="11" height="16"/><use href="#xx" x="1361.20" y="0" width="11" height="16"/><use href="#xx" x="1405.00" y="0" width="11" height="16"/></svg>
<span class="t" style="left:364.53px;top:754.00px;font-size:15.00px;color:#607080;">#</span>
<span class="t" style="left:396.53px;top:754.00px;font-size:15.00px;color:#607080;letter-spacing:0.861px;">Wilman Septian</span>
<span class="t" style="left:1804.93px;top:754.00px;font-size:15.00px;color:#607080;">-</span>
<svg class="b" style="left:356.00px;top:753.90px;" width="1508.00" height="17.00" viewBox="0 0 1508 17"><use href="#xx" x="227.00" y="0" width="11" height="16"/><use href="#xx" x="260.56" y="0" width="11" height="16"/><use href="#xx" x="294.12" y="0" width="11" height="16"/><use href="#xx" x="327.68" y="0" width="11" height="16"/><use href="#xx" x="361.24" y="0" width="11" height="16"/><use href="#xx" x="394.80" y="0" width="11" height="16"/><use href="#xx" x="428.36" y="0" width="11" height="16"/><use href="#xx" x="461.92" y="0" width="11" height="16"/><use href="#xx" x="495.48" y="0" width="11" height="16"/><use href="#xx" x="529.04" y="0" width="11" height="16"/><use href="#xx" x="572.80" y="0" width="11" height="16"/><use href="#xx" x="616.60" y="0" width="11" height="16"/><use href="#xx" x="660.40" y="0" width="11" height="16"/><use href="#xx" x="704.20" y="0" width="11" height="16"/><use href="#xx" x="748.00" y="0" width="11" height="16"/><use href="#xx" x="791.80" y="0" width="11" height="16"/><use href="#xx" x="835.60" y="0" width="11" height="16"/><use href="#xx" x="879.40" y="0" width="11" height="16"/><use href="#xx" x="923.20" y="0" width="11" height="16"/><use href="#xx" x="967.00" y="0" width="11" height="16"/><svg x="1010.80" y="0.15" width="16" height="16" viewBox="0 0 512 512"><path fill="#048204" d="M504 256c0 136.967-111.033 248-248 248S8 392.967 8 256 119.033 8 256 8s248 111.033 248 248zM227.314 387.314l184-184c6.248-6.248 6.248-16.379 0-22.627l-22.627-22.627c-6.248-6.249-16.379-6.249-22.628 0L216 308.118l-70.059-70.059c-6.248-6.248-16.379-6.248-22.628 0l-22.627 22.627c-6.248 6.248-6.248 16.379 0 22.627l104 104c6.249 6.249 16.379 6.249 22.628.001z"/></svg><use href="#xx" x="1054.60" y="0" width="11" height="16"/><use href="#xx" x="1098.40" y="0" width="11" height="16"/><use href="#xx" x="1142.20" y="0" width="11" height="16"/><use href="#xx" x="1186.00" y="0" width="11" height="16"/><use href="#xx" x="1229.80" y="0" width="11" height="16"/><use href="#xx" x="1273.60" y="0" width="11" height="16"/><use href="#xx" x="1317.40" y="0" width="11" height="16"/><use href="#xx" x="1361.20" y="0" width="11" height="16"/><use href="#xx" x="1405.00" y="0" width="11" height="16"/></svg>
<span class="t" style="left:364.53px;top:795.00px;font-size:15.00px;color:#607080;">#</span>
<span class="t" style="left:395.37px;top:795.00px;font-size:15.00px;color:#607080;letter-spacing:0.764px;">Dede Hidayatullah</span>
<span class="t" style="left:1804.93px;top:795.00px;font-size:15.00px;color:#607080;">-</span>
<svg class="b" style="left:356.00px;top:794.90px;" width="1508.00" height="17.00" viewBox="0 0 1508 17"><use href="#xx" x="227.00" y="0" width="11" height="16"/><use href="#xx" x="260.56" y="0" width="11" height="16"/><use href="#xx" x="294.12" y="0" width="11" height="16"/><use href="#xx" x="327.68" y="0" width="11" height="16"/><use href="#xx" x="361.24" y="0" width="11" height="16"/><use href="#xx" x="394.80" y="0" width="11" height="16"/><use href="#xx" x="428.36" y="0" width="11" height="16"/><use href="#xx" x="461.92" y="0" width="11" height="16"/><use href="#xx" x="495.48" y="0" width="11" height="16"/><use href="#xx" x="529.04" y="0" width="11" height="16"/><use href="#xx" x="572.80" y="0" width="11" height="16"/><use href="#xx" x="616.60" y="0" width="11" height="16"/><use href="#xx" x="660.40" y="0" width="11" height="16"/><use href="#xx" x="704.20" y="0" width="11" height="16"/><use href="#xx" x="748.00" y="0" width="11" height="16"/><use href="#xx" x="791.80" y="0" width="11" height="16"/><use href="#xx" x="835.60" y="0" width="11" height="16"/><use href="#xx" x="879.40" y="0" width="11" height="16"/><use href="#xx" x="923.20" y="0" width="11" height="16"/><use href="#xx" x="967.00" y="0" width="11" height="16"/><use href="#xx" x="1010.80" y="0" width="11" height="16"/><use href="#xx" x="1054.60" y="0" width="11" height="16"/><use href="#xx" x="1098.40" y="0" width="11" height="16"/><use href="#xx" x="1142.20" y="0" width="11" height="16"/><use href="#xx" x="1186.00" y="0" width="11" height="16"/><use href="#xx" x="1229.80" y="0" width="11" height="16"/><use href="#xx" x="1273.60" y="0" width="11" height="16"/><use href="#xx" x="1317.40" y="0" width="11" height="16"/><use href="#xx" x="1361.20" y="0" width="11" height="16"/><use href="#xx" x="1405.00" y="0" width="11" height="16"/></svg>
<span class="t" style="left:1599.76px;top:878.00px;font-size:20.00px;color:#bdc1ca;letter-spacing:-0.105px;">Activate Windows</span>
<span class="t" style="left:1599.07px;top:901.00px;font-size:14.60px;color:#c3c7cf;letter-spacing:0.182px;">Go to Settings to activate Windows.</span>
<div class="b" style="left:300.00px;top:939.00px;width:1620.00px;height:29.00px;background:#435ebe;"></div>
<span class="t" style="left:1343.34px;top:947.00px;font-size:15.40px;color:#ffffff;letter-spacing:0.498px;-webkit-text-stroke:0.3px #ffffff;">MDHPOS - V1.2 | Copyright © 2021 All rights reserved.</span>
<svg class="b" style="left:1750.50px;top:949.20px;" width="15.40" height="15.40" viewBox="0 0 512 512"><path fill="#e63946" d="M462.300 62.600C407.500 15.900 326 24.300 275.700 76.200L256 96.500l-19.700-20.300C186.100 24.300 104.500 15.900 49.700 62.600c-62.800 53.600-66.100 149.800-9.900 207.900l193.500 199.800c12.500 12.900 32.800 12.900 45.300 0l193.500-199.800c56.300-58.100 53-154.300-9.800-207.900z"/></svg>
<span class="t" style="left:1769.81px;top:947.00px;font-size:15.40px;color:#ffffff;letter-spacing:0.297px;-webkit-text-stroke:0.3px #ffffff;">by Budak Pasundan</span>
</body></html>
